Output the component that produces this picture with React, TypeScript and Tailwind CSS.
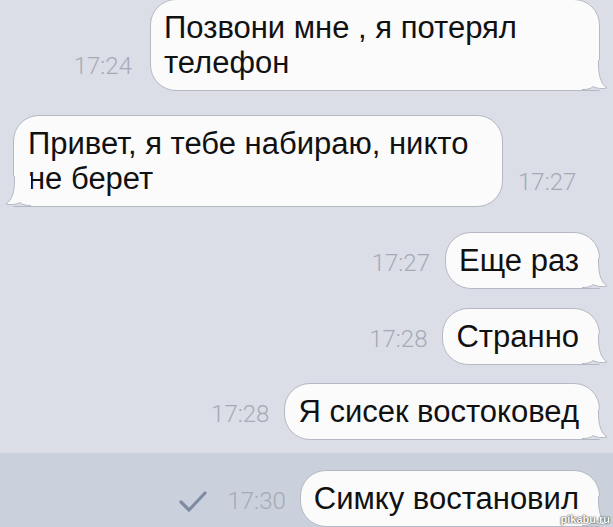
import React from 'react';

const FONT = { fontFamily: '"Liberation Sans", Arial, sans-serif' };
const TIME_FONT = { fontFamily: 'Roboto, "Liberation Sans", sans-serif' };

function Tail({ side, bg }: { side: 'left' | 'right'; bg: string }) {
  const outline = 'M20.5 0 L20.5 4 C20.5 16 23 24 29 28 C24 29.2 19 28.6 15 26.5 C13 28.5 10 29.5 4 29.5';
  return (
    <svg
      width="30"
      height="30"
      viewBox="0 0 30 30"
      className={`absolute bottom-0 ${side === 'right' ? '-right-[9px]' : '-left-[9px] -scale-x-100'}`}
    >
      <rect x="4" y="0" width="26" height="30" fill={bg} />
      <path d={outline + ' L4 0 Z'} fill="#fbfbfc" />
      <path d={outline} fill="none" stroke="#b4b9c3" strokeWidth="1" />
    </svg>
  );
}

function Bubble({
  children,
  side = 'right',
  bg = '#dbdee7',
  className = '',
}: {
  children: React.ReactNode;
  side?: 'left' | 'right';
  bg?: string;
  className?: string;
}) {
  return (
    <div
      className={`relative bg-[#fbfbfc] border border-[#b4b9c3] rounded-[26px] py-[10px] text-[31px] leading-[35px] text-[#111] ${
        side === 'right' ? 'rounded-br-none pl-[13px] pr-[20px]' : 'rounded-bl-none pl-[14px] pr-[14px]'
      } ${className}`}
      style={FONT}
    >
      {children}
      <Tail side={side} bg={bg} />
    </div>
  );
}

function Time({ t, className = '' }: { t: string; className?: string }) {
  return (
    <span className={`text-[24px] leading-[24px] font-light text-[#a5aab4] ${className}`} style={TIME_FONT}>
      {t}
    </span>
  );
}

function Check() {
  return (
    <svg width="28" height="22" viewBox="0 0 28 22" className="mb-[14px] mr-[6px]">
      <path d="M2 11 L10 19 L26 2" fill="none" stroke="#7f8ba0" strokeWidth="3.2" strokeLinecap="round" strokeLinejoin="round" />
    </svg>
  );
}

export default function App() {
  return (
    <div className="relative w-[613px] h-[527px] overflow-hidden bg-[#dbdee7]">
      <div className="flex flex-col">
        <div className="flex justify-end items-end gap-[18px] pr-[13px] -mt-[1px]">
          <Time t="17:24" className="mb-[13px]" />
          <Bubble className="w-[450px]">
            Позвони мне , я потерял
            <br />
            телефон
          </Bubble>
        </div>

        <div className="flex items-end gap-[15px] pl-[13px] mt-[24px]">
          <Bubble side="left" className="w-[490px]">
            Привет, я тебе набираю, никто
            <br />
            не берет
          </Bubble>
          <Time t="17:27" className="mb-[13px]" />
        </div>

        <div className="flex justify-end items-end gap-[15px] pr-[13px] mt-[25px]">
          <Time t="17:27" className="mb-[14px]" />
          <Bubble>Еще раз</Bubble>
        </div>

        <div className="flex justify-end items-end gap-[15px] pr-[13px] mt-[19px]">
          <Time t="17:28" className="mb-[14px]" />
          <Bubble>Странно</Bubble>
        </div>

        <div className="flex justify-end items-end gap-[15px] pr-[13px] mt-[18px]">
          <Time t="17:28" className="mb-[14px]" />
          <Bubble>Я сисек востоковед</Bubble>
        </div>

        <div className="mt-[13px] bg-[#cad1dc] pt-[17px] pb-[10px]">
          <div className="flex justify-end items-end gap-[14px] pr-[13px]">
            <Check />
            <Time t="17:30" className="mb-[14px]" />
            <Bubble bg="#cad1dc">Симку востановил</Bubble>
          </div>
        </div>
      </div>

      <span
        className="absolute right-[3px] bottom-[2px] text-[11px] leading-[12px] font-bold text-white [text-shadow:0_0_2px_#333,0_0_1px_#333]"
        style={FONT}
      >
        pikabu.ru
      </span>
    </div>
  );
}
